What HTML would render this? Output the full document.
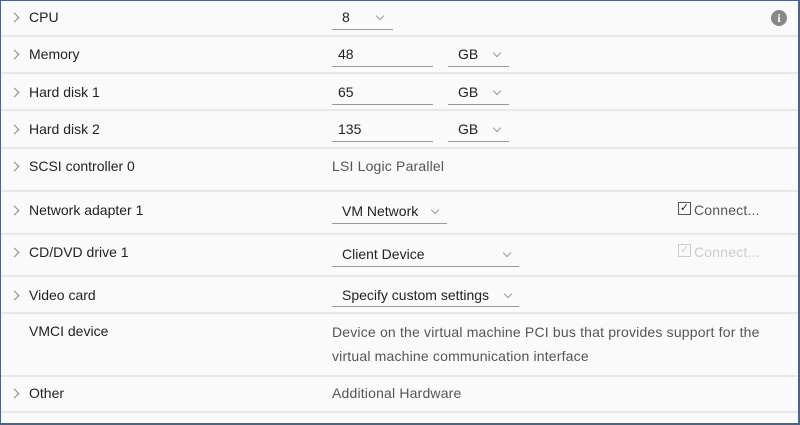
<!DOCTYPE html>
<html><head><meta charset="utf-8"><style>
*{margin:0;padding:0;box-sizing:border-box}
body{width:800px;height:425px;overflow:hidden;background:#fafafa;font-family:"Liberation Sans",sans-serif;font-size:14px;color:#222}
#f{position:absolute;left:0;top:0;width:800px;height:425px;border:1px solid #4a6585;border-bottom:2px solid #4a6585;border-right:2px solid #4a6585}
.hr{position:absolute;left:1px;right:2px;height:2px;background:#e8e8e8}
.t{position:absolute;white-space:nowrap;line-height:16px}
.g{color:#555;letter-spacing:0.18px}
.c{position:absolute;width:7px;height:7px;border-right:1.2px solid #888;border-top:1.2px solid #888;transform:rotate(45deg)}
.u{position:absolute;height:1px;background:#999}
.d{position:absolute;width:6px;height:6px;border-right:1px solid #999;border-bottom:1px solid #999;transform:rotate(45deg)}
.cb{position:absolute;width:13px;height:13px;border:1px solid #555;font-size:11px;line-height:11px;text-align:center}
</style></head><body><div id="f"></div>
<div class="hr" style="top:35px"></div><div class="hr" style="top:72px"></div><div class="hr" style="top:109px"></div><div class="hr" style="top:147px"></div><div class="hr" style="top:190px"></div><div class="hr" style="top:233px"></div><div class="hr" style="top:275px"></div><div class="hr" style="top:312px"></div><div class="hr" style="top:375px"></div><div class="hr" style="top:411px"></div>

<div class="c" style="left:11px;top:14px"></div><div class="t" style="left:29px;top:9px">CPU</div>
<div class="c" style="left:11px;top:51px"></div><div class="t" style="left:29px;top:46px">Memory</div>
<div class="c" style="left:11px;top:89px"></div><div class="t" style="left:29px;top:84px">Hard disk 1</div>
<div class="c" style="left:11px;top:126px"></div><div class="t" style="left:29px;top:121px">Hard disk 2</div>
<div class="c" style="left:11px;top:163px"></div><div class="t" style="left:29px;top:158px">SCSI controller 0</div>
<div class="c" style="left:11px;top:207px"></div><div class="t" style="left:29px;top:202px">Network adapter 1</div>
<div class="c" style="left:11px;top:249px"></div><div class="t" style="left:29px;top:244px">CD/DVD drive 1</div>
<div class="c" style="left:11px;top:292px"></div><div class="t" style="left:29px;top:287px">Video card</div>
<div class="t" style="left:29px;top:323px">VMCI device</div>
<div class="c" style="left:11px;top:390px"></div><div class="t" style="left:29px;top:385px">Other</div>

<div class="t" style="left:342px;top:9px">8</div><div class="d" style="left:377px;top:13px"></div><div class="u" style="left:332px;width:61px;top:29px"></div>
<div style="position:absolute;left:771px;top:10px;width:16px;height:16px;border-radius:50%;background:#888;color:#fafafa;font:bold 12px/16px 'Liberation Serif',serif;text-align:center">i</div>

<div class="t" style="left:338px;top:46px">48</div><div class="u" style="left:332px;width:101px;top:66px"></div>
<div class="t" style="left:458px;top:46px">GB</div><div class="d" style="left:494px;top:50px"></div><div class="u" style="left:448px;width:61px;top:66px"></div>
<div class="t" style="left:338px;top:84px">65</div><div class="u" style="left:332px;width:101px;top:104px"></div>
<div class="t" style="left:458px;top:84px">GB</div><div class="d" style="left:494px;top:88px"></div><div class="u" style="left:448px;width:61px;top:104px"></div>
<div class="t" style="left:338px;top:121px">135</div><div class="u" style="left:332px;width:101px;top:141px"></div>
<div class="t" style="left:458px;top:121px">GB</div><div class="d" style="left:494px;top:125px"></div><div class="u" style="left:448px;width:61px;top:141px"></div>

<div class="t g" style="left:332px;top:158px">LSI Logic Parallel</div>

<div class="t" style="left:342px;top:203px">VM Network</div><div class="d" style="left:432px;top:207px"></div><div class="u" style="left:332px;width:115px;top:223px"></div>
<div class="cb" style="left:678px;top:202px">✓</div><div class="t g" style="left:694px;top:202px">Connect...</div>

<div class="t" style="left:342px;top:246px">Client Device</div><div class="d" style="left:504px;top:250px"></div><div class="u" style="left:332px;width:187px;top:266px"></div>
<div class="cb" style="left:678px;top:244px;border-color:#ccc;color:#ccc">✓</div><div class="t g" style="left:694px;top:244px;color:#ccc">Connect...</div>

<div class="t" style="left:342px;top:287px">Specify custom settings</div><div class="d" style="left:505px;top:291px"></div><div class="u" style="left:332px;width:187px;top:306px"></div>

<div class="t g" style="left:332px;top:324px">Device on the virtual machine PCI bus that provides support for the</div>
<div class="t g" style="left:332px;top:348px">virtual machine communication interface</div>
<div class="t g" style="left:332px;top:385px">Additional Hardware</div>
</body></html>
